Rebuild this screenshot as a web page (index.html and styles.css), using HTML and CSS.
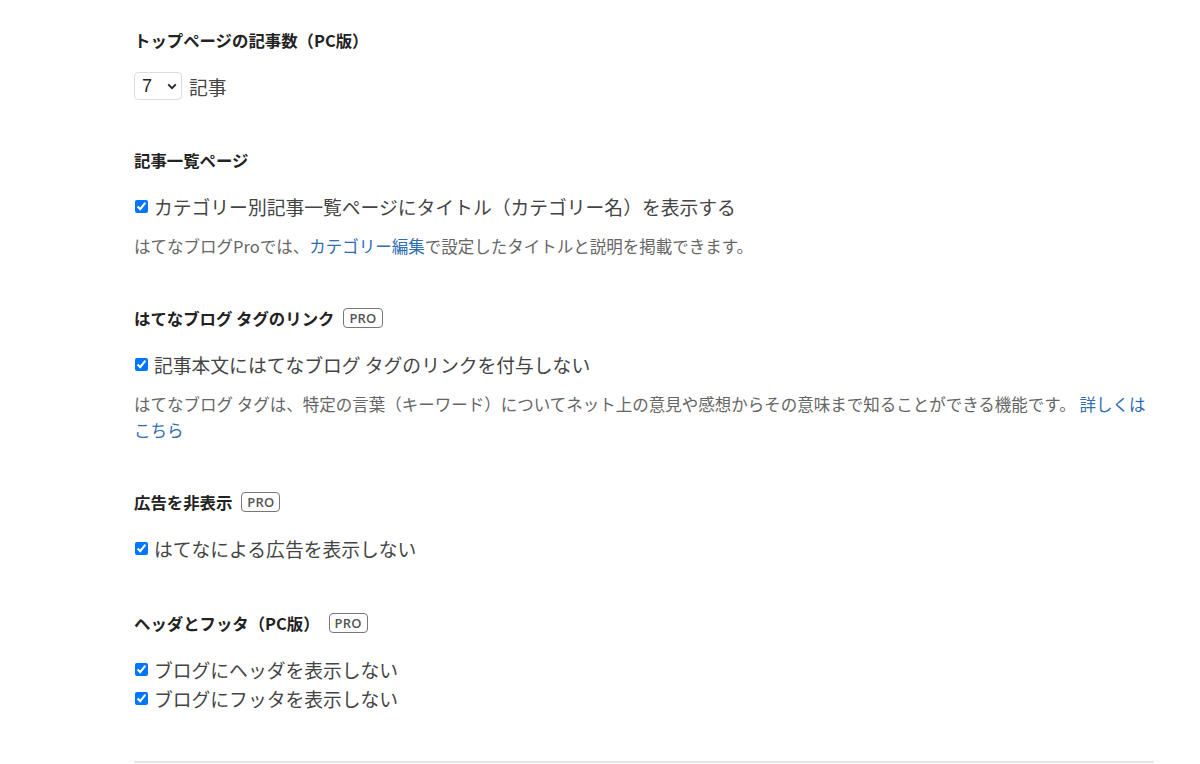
FILE: index.html
```html
<!DOCTYPE html>
<html lang="ja">
<head>
<meta charset="UTF-8">
<meta name="viewport" content="width=device-width, initial-scale=1.0">
<link rel="stylesheet" href="styles.css">
<title>デザイン設定</title>
</head>
<body>

<div class="settings">
    <div class="section">
        <h3>トップページの記事数（PC版）</h3>
        <div class="count-row">
            <span class="select-wrap">
                <select name="entries">
                    <option>5</option>
                    <option selected>7</option>
                    <option>10</option>
                </select>
                <svg class="chevron" width="10" height="7" viewBox="0 0 10 7"><path d="M1.2 1.4 5 5.2 8.8 1.4" fill="none" stroke="#222" stroke-width="1.8"/></svg>
            </span>
            <span>記事</span>
        </div>
    </div>

    <div class="section">
        <h3>記事一覧ページ</h3>
        <label class="check"><input type="checkbox" checked>カテゴリー別記事一覧ページにタイトル（カテゴリー名）を表示する</label>
        <p class="note">はてなブログProでは、<a href="#">カテゴリー編集</a>で設定したタイトルと説明を掲載できます。</p>
    </div>

    <div class="section">
        <h3>はてなブログ タグのリンク<span class="pro">PRO</span></h3>
        <label class="check"><input type="checkbox" checked>記事本文にはてなブログ タグのリンクを付与しない</label>
        <p class="note">はてなブログ タグは、特定の言葉（キーワード）についてネット上の意見や感想からその意味まで知ることができる機能です。 <a href="#">詳しくは<br>こちら</a></p>
    </div>

    <div class="section">
        <h3>広告を非表示<span class="pro">PRO</span></h3>
        <label class="check"><input type="checkbox" checked>はてなによる広告を表示しない</label>
    </div>

    <div class="section">
        <h3>ヘッダとフッタ（PC版）<span class="pro">PRO</span></h3>
        <label class="check"><input type="checkbox" checked>ブログにヘッダを表示しない</label>
        <label class="check"><input type="checkbox" checked>ブログにフッタを表示しない</label>
    </div>

    <hr class="divider">
</div>

</body>
</html>
```

FILE: styles.css
```css
body {
    margin: 0;
    background-color: #FFFFFF;
    font-family: "Noto Sans CJK JP", "Noto Sans", sans-serif;
    color: #333;
}

.settings {
    width: 1020px;
    margin-left: 134px;
    padding-top: 28px;
}

.section {
    padding-bottom: 48px;
}

h3 {
    margin: 0 0 20px;
    font-size: 16.4px;
    line-height: 24px;
    font-weight: bold;
    color: #222;
    display: flex;
    align-items: center;
}

/* значок PRO рядом с заголовком */
.pro {
    margin-left: 9px;
    padding: 0 5px;
    height: 18px;
    line-height: 18px;
    border: 1px solid #777;
    border-radius: 4px;
    font-family: "Open Sans", sans-serif;
    font-size: 13px;
    font-weight: 600;
    color: #555;
    letter-spacing: 0.2px;
}

.count-row {
    display: flex;
    align-items: center;
    gap: 7px;
    font-size: 18.8px;
    color: #444;
    height: 28px;
}

.select-wrap {
    position: relative;
    display: inline-block;
}

.select-wrap select {
    appearance: none;
    width: 48px;
    height: 28px;
    padding: 0 0 0 7px;
    border: 1px solid #dcdcdc;
    border-radius: 4px;
    background-color: #FFFFFF;
    font-family: "Liberation Sans", sans-serif;
    font-size: 18px;
    color: #222;
    display: block;
}

.chevron {
    position: absolute;
    right: 5px;
    top: 11px;
    pointer-events: none;
}

.check {
    display: flex;
    align-items: center;
    height: 29px;
    font-size: 18.8px;
    color: #444;
}

.check input {
    width: 13px;
    height: 13px;
    margin: 0 6px 0 1px;
}

.note {
    margin: 12px 0 -1px;
    font-size: 16.5px;
    line-height: 26px;
    color: #666;
}

.note a {
    color: #2f6cb3;
    text-decoration: none;
}

.divider {
    margin: 0;
    border: none;
    border-top: 2px solid #e6e6e6;
}
```
